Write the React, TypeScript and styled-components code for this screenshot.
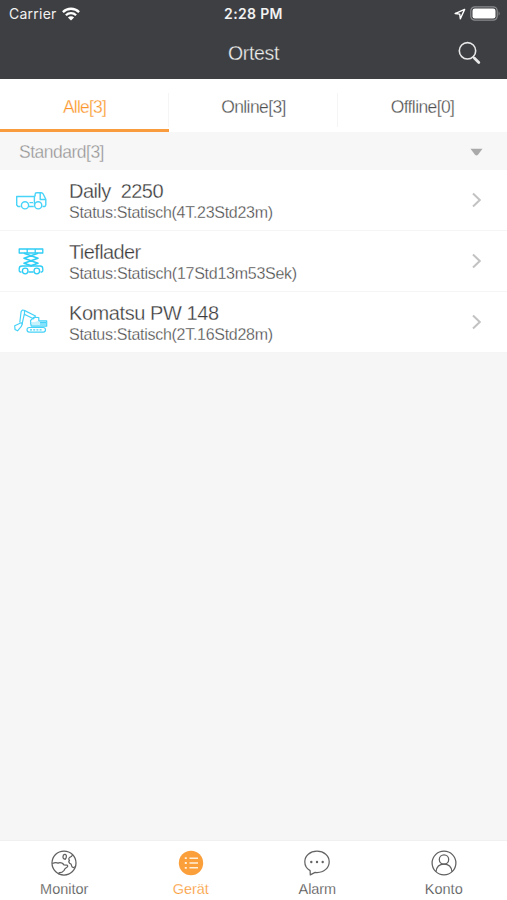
import React from "react";
import styled, { createGlobalStyle } from "styled-components";

const Global = createGlobalStyle`
  * { box-sizing: border-box; }
  body { margin: 0; background: #f6f6f6; font-family: "Liberation Sans", Arial, sans-serif; color: #626262; }
`;

const Screen = styled.div`
  display: flex;
  flex-direction: column;
  width: 507px;
  height: 900px;
  overflow: hidden;
  background: #f6f6f6;
`;

const Header = styled.header`
  height: 79px;
  flex: none;
  background: #3e3f42;
  color: #f2f2f2;
`;

const StatusBar = styled.div`
  display: grid;
  grid-template-columns: 1fr auto 1fr;
  align-items: center;
  height: 27px;
  padding: 0 6px 0 9px;
`;

const Carrier = styled.div`
  display: flex;
  align-items: center;
  gap: 5px;
  font: 14px Inter, sans-serif;
  letter-spacing: 0.25px;
`;

const Clock = styled.div`
  margin-right: 3px;
  font: 600 14px Inter, sans-serif;
  letter-spacing: 0.35px;
`;

const StatusIcons = styled.div`
  display: flex;
  align-items: center;
  justify-content: flex-end;
  gap: 4px;
`;

const TitleBar = styled.div`
  display: grid;
  grid-template-columns: 1fr auto 1fr;
  align-items: center;
  height: 52px;
  padding-right: 26px;
  padding-left: 26px;
`;

/* A hairline stroke in the surface colour gives the text a light weight. */
const Title = styled.h1`
  grid-column: 2;
  margin: 0;
  padding-top: 1px;
  font-size: 19.5px;
  font-weight: 400;
  letter-spacing: -0.35px;
  color: #f0f0f0;
  -webkit-text-stroke: 0.3px #3e3f42;
`;

const SearchButton = styled.button`
  display: flex;
  justify-self: end;
  padding: 0;
  border: 0;
  background: none;
`;

const Tabs = styled.nav`
  display: grid;
  grid-template-columns: repeat(3, 1fr);
  height: 53px;
  flex: none;
  background: #fff;
`;

const Tab = styled.div<{ $active?: boolean; $spacing: number }>`
  display: flex;
  justify-content: center;
  padding-top: 18px;
  font-size: 17.5px;
  line-height: 20px;
  letter-spacing: ${(p) => p.$spacing}px;
  color: ${(p) => (p.$active ? "#fa9429" : "#4c4c4c")};
  -webkit-text-stroke: 0.3px #fff;
  border-bottom: 3px solid ${(p) => (p.$active ? "#f99c3e" : "#fff")};
  background: linear-gradient(#f5f5f5, #f5f5f5) right 14px / 1px 34px no-repeat;
  &:last-child { background: none; }
`;

const GroupHeader = styled.div`
  display: flex;
  align-items: center;
  justify-content: space-between;
  height: 38px;
  flex: none;
  padding: 2px 24px 0 19px;
  background: #f7f7f7;
  color: #939393;
  font-size: 17.5px;
  letter-spacing: -0.5px;
  -webkit-text-stroke: 0.3px #f7f7f7;
`;

const Row = styled.div`
  display: grid;
  grid-template-columns: 36px 1fr 12px;
  column-gap: 21px;
  align-items: center;
  height: 61px;
  flex: none;
  padding: 0 24px 0 13px;
  background: #fff;
  border-bottom: 1px solid #f5f5f5;
`;

const Details = styled.div`
  margin-left: -1px;
  padding-top: 2px;
  -webkit-text-stroke: 0.3px #fff;
`;

const Name = styled.div<{ $spacing: number }>`
  font-size: 20px;
  line-height: 23px;
  letter-spacing: ${(p) => p.$spacing}px;
  white-space: pre;
  color: #3a3a3a;
`;

const Status = styled.div<{ $spacing: number }>`
  font-size: 16px;
  line-height: 19px;
  letter-spacing: ${(p) => p.$spacing}px;
  white-space: nowrap;
  color: #444;
`;

const Spacer = styled.div`
  flex: 1;
`;

const BottomBar = styled.nav`
  display: grid;
  grid-template-columns: repeat(4, 1fr);
  height: 60px;
  flex: none;
  padding-left: 1px;
  background: #fff;
  border-top: 1px solid #f0f0f0;
`;

const NavItem = styled.div<{ $active?: boolean; $spacing: number }>`
  display: flex;
  flex-direction: column;
  align-items: center;
  gap: 4px;
  padding-top: 9px;
  font-size: 14.5px;
  line-height: 18px;
  letter-spacing: ${(p) => p.$spacing}px;
  color: ${(p) => (p.$active ? "#fa9429" : "#484848")};
  -webkit-text-stroke: 0.25px #fff;
`;

const WifiIcon = () => (
  <svg width="18" height="14" viewBox="0 0 18 14" fill="none" stroke="#fff" strokeWidth="2.3">
    <path d="M.9 5.1a11.5 11.5 0 0 1 16.2 0M3.9 8.3a7.2 7.2 0 0 1 10.2 0" />
    <path d="M9 13.5 5.9 10.6a4.4 4.4 0 0 1 6.2 0Z" fill="#fff" stroke="none" />
  </svg>
);

const LocationIcon = () => (
  <svg width="12" height="12" viewBox="0 0 13 13" fill="none" stroke="#fff" strokeWidth="1.5" strokeLinejoin="round">
    <path d="M11.5 1.5 1.2 6l5 .7.7 5Z" />
  </svg>
);

const BatteryIcon = () => (
  <svg width="31" height="15" viewBox="0 0 31 15">
    <rect x=".8" y=".8" width="26.4" height="13.4" rx="4" fill="none" stroke="#8b8c8e" strokeWidth="1.2" />
    <rect x="2.5" y="2.5" width="23" height="10" rx="2.3" fill="#fff" />
    <path d="M28.6 5.2q2 2.3 0 4.6Z" fill="#8b8c8e" />
  </svg>
);

const SearchIcon = () => (
  <svg width="23" height="24" viewBox="0 0 23 24" fill="none" stroke="#e8e8e8">
    <circle cx="9.5" cy="9.8" r="8.2" strokeWidth="1.6" />
    <path d="m15.2 16 2.2 2.2" strokeWidth="1.7" />
    <path d="m16.5 17.2 4.3 4.3" strokeWidth="2.8" strokeLinecap="round" />
  </svg>
);

const TriangleIcon = () => (
  <svg width="13" height="8" viewBox="0 0 13 8"><path d="M.5.8h12L8 6.8q-1.5 1.2-3 0Z" fill="#aaa" /></svg>
);

const ChevronIcon = () => (
  <svg width="12" height="16" viewBox="0 0 12 16" fill="none" stroke="#c2c2c2" strokeWidth="2">
    <path d="m2 1.5 6.8 6.5L2 14.5" />
  </svg>
);

const TruckIcon = () => (
  <svg width="36" height="30" viewBox="0 0 36 30" fill="none" stroke="#48d3f8" strokeWidth="1.4" strokeLinejoin="round">
    <path d="M7.5 21.5H5l-1.3-1.4V11.5h17.7v8M16 21.5h4.8M29.5 21.5H32l.8-1.5v-5.8L30.2 9q-.7-1.3-2-1.3h-4.4q-1.7 0-1.7 1.7v2.1" />
    <path d="M27.2 8v6.5h5.2M16.5 17.6h3.5" />
    <circle cx="12" cy="20.3" r="3.6" />
    <circle cx="25.2" cy="20.3" r="3.6" />
  </svg>
);

const LiftIcon = () => (
  <svg width="36" height="30" viewBox="0 0 36 30" fill="none" stroke="#2ecdf5" strokeWidth="1.3" strokeLinejoin="round">
    <path d="M6.2 3h23.6v4H6.2ZM14.2 3v4M22.2 3v4" />
    <path d="m11 7.2 14 5.1-14 4.9 8 2.8M25 7.2l-14 5.1 14 4.9-8 2.8" strokeWidth="1.6" />
    <path d="M8.5 26H7.2q-1-.3-1-1.6v-1.7Q6.2 20 9 20h18q2.8 0 2.8 2.7v1.7q0 1.3-1 1.6h-1.3M15.5 26h5" />
    <circle cx="12.2" cy="25" r="2.8" />
    <circle cx="23.8" cy="25" r="2.8" />
  </svg>
);

const ExcavatorIcon = () => (
  <svg width="36" height="30" viewBox="0 0 36 30" fill="none" stroke="#46d2f8" strokeWidth="1.2" strokeLinejoin="round">
    <path d="m6.8 15.5 1.3-10.8q1.2-2.5 3.2-1.3L22.5 9l-2 2.8-9.2-4.6L9 17.3" />
    <path d="M8.2 15.8 1.7 18.7l.3 3.7 2.5 1.4 3.6-4.1 1.3-3Z" />
    <path d="M11.5 3.4v4M17.5 13.5l3.5-3.2 4.8.2v5.8h-8Z" />
    <path d="M25.8 13.8h7.9v5.4H18.3l-.8-3" fill="#c5f2fd" />
    <path d="M27 15.5h6M27 17h6" />
    <rect x="14" y="20.5" width="18.5" height="4.6" rx="2.3" />
    <path d="M17 22.8h12.5" strokeDasharray="2 1.2" />
  </svg>
);

const GlobeIcon = () => (
  <svg width="26" height="26" viewBox="0 0 26 26" fill="none" stroke="#606060" strokeWidth="1.25" strokeLinejoin="round">
    <circle cx="13" cy="13" r="12" />
    <path d="M1.3 13.5q3.4-1.4 5.8-.4 1.8-1 4.3.1l1.5 1.6 3 .3q1.6 1.1 0 2.2-2.2 1.2-2.8 3-2 2.4-4.4 2.4-1.3.4-.8 1.6" />
    <path d="M12.4 5.1q2-1.6 3 .7.2 2.4-1.3 3.6-2.2-.4-2.2-2.3ZM21.6 4.6q-.6 2-2.9 2.8-1.7 1.5-.2 2.8-1.5 1.5.2 3.2 1.9.4 1.9 2.4.1 1.5 1.7 1.9l1.6-.9" />
  </svg>
);

const ListIcon = () => (
  <svg width="26" height="26" viewBox="0 0 26 26">
    <circle cx="13" cy="13" r="12.2" fill="#fb9f3b" />
    <path d="M11.5 8.2h8.5M11.5 13h8.5M11.5 17.8h8.5" stroke="#fff0dc" strokeWidth="1.4" />
    <path d="M6.8 8.2h2M6.8 13h2M6.8 17.8h2" stroke="#fff0dc" strokeWidth="1.8" />
  </svg>
);

const ChatIcon = () => (
  <svg width="26" height="26" viewBox="0 0 26 26" fill="none" stroke="#646464" strokeWidth="1.25" strokeLinejoin="round">
    <path d="M13 1.2C6 1.2.8 5.7.8 11.7c0 4.1 2.1 7.1 5.3 8.9l.2 4.3 4.8-2.5q1 .1 1.9.1c7 0 12.2-4.7 12.2-10.8S20 1.2 13 1.2Z" />
    <g fill="#646464" stroke="none">
      <circle cx="7.3" cy="12" r="1.2" /><circle cx="13" cy="12" r="1.2" /><circle cx="18.7" cy="12" r="1.2" />
    </g>
  </svg>
);

const UserIcon = () => (
  <svg width="26" height="26" viewBox="0 0 26 26" fill="none" stroke="#606060" strokeWidth="1.25">
    <circle cx="13" cy="13" r="11.9" />
    <circle cx="13" cy="9.5" r="4.7" />
    <path d="M5 21.8c.5-4.6 3.6-7.6 8-7.6s7.5 3 8 7.6" />
  </svg>
);

const devices = [
  { name: "Daily  2250", status: "Status:Statisch(4T.23Std23m)", icon: <TruckIcon />, nameSpacing: -0.55, spacing: -0.28 },
  { name: "Tieflader", status: "Status:Statisch(17Std13m53Sek)", icon: <LiftIcon />, nameSpacing: -0.6, spacing: -0.26 },
  { name: "Komatsu PW 148", status: "Status:Statisch(2T.16Std28m)", icon: <ExcavatorIcon />, nameSpacing: -0.43, spacing: -0.28 },
];

export default function App() {
  return (
    <>
      <Global />
      <Screen>
        <Header>
          <StatusBar>
            <Carrier>Carrier <WifiIcon /></Carrier>
            <Clock>2:28 PM</Clock>
            <StatusIcons><LocationIcon /><BatteryIcon /></StatusIcons>
          </StatusBar>
          <TitleBar>
            <Title>Ortest</Title>
            <SearchButton aria-label="Suche"><SearchIcon /></SearchButton>
          </TitleBar>
        </Header>
        <Tabs>
          <Tab $active $spacing={-0.8}>Alle[3]</Tab>
          <Tab $spacing={-0.6}>Online[3]</Tab>
          <Tab $spacing={-0.6}>Offline[0]</Tab>
        </Tabs>
        <GroupHeader>Standard[3]<TriangleIcon /></GroupHeader>
        {devices.map((d) => (
          <Row key={d.name}>
            {d.icon}
            <Details>
              <Name $spacing={d.nameSpacing}>{d.name}</Name>
              <Status $spacing={d.spacing}>{d.status}</Status>
            </Details>
            <ChevronIcon />
          </Row>
        ))}
        <Spacer />
        <BottomBar>
          <NavItem $spacing={0}><GlobeIcon />Monitor</NavItem>
          <NavItem $active $spacing={-0.1}><ListIcon />Gerät</NavItem>
          <NavItem $spacing={-0.1}><ChatIcon />Alarm</NavItem>
          <NavItem $spacing={0}><UserIcon />Konto</NavItem>
        </BottomBar>
      </Screen>
    </>
  );
}
